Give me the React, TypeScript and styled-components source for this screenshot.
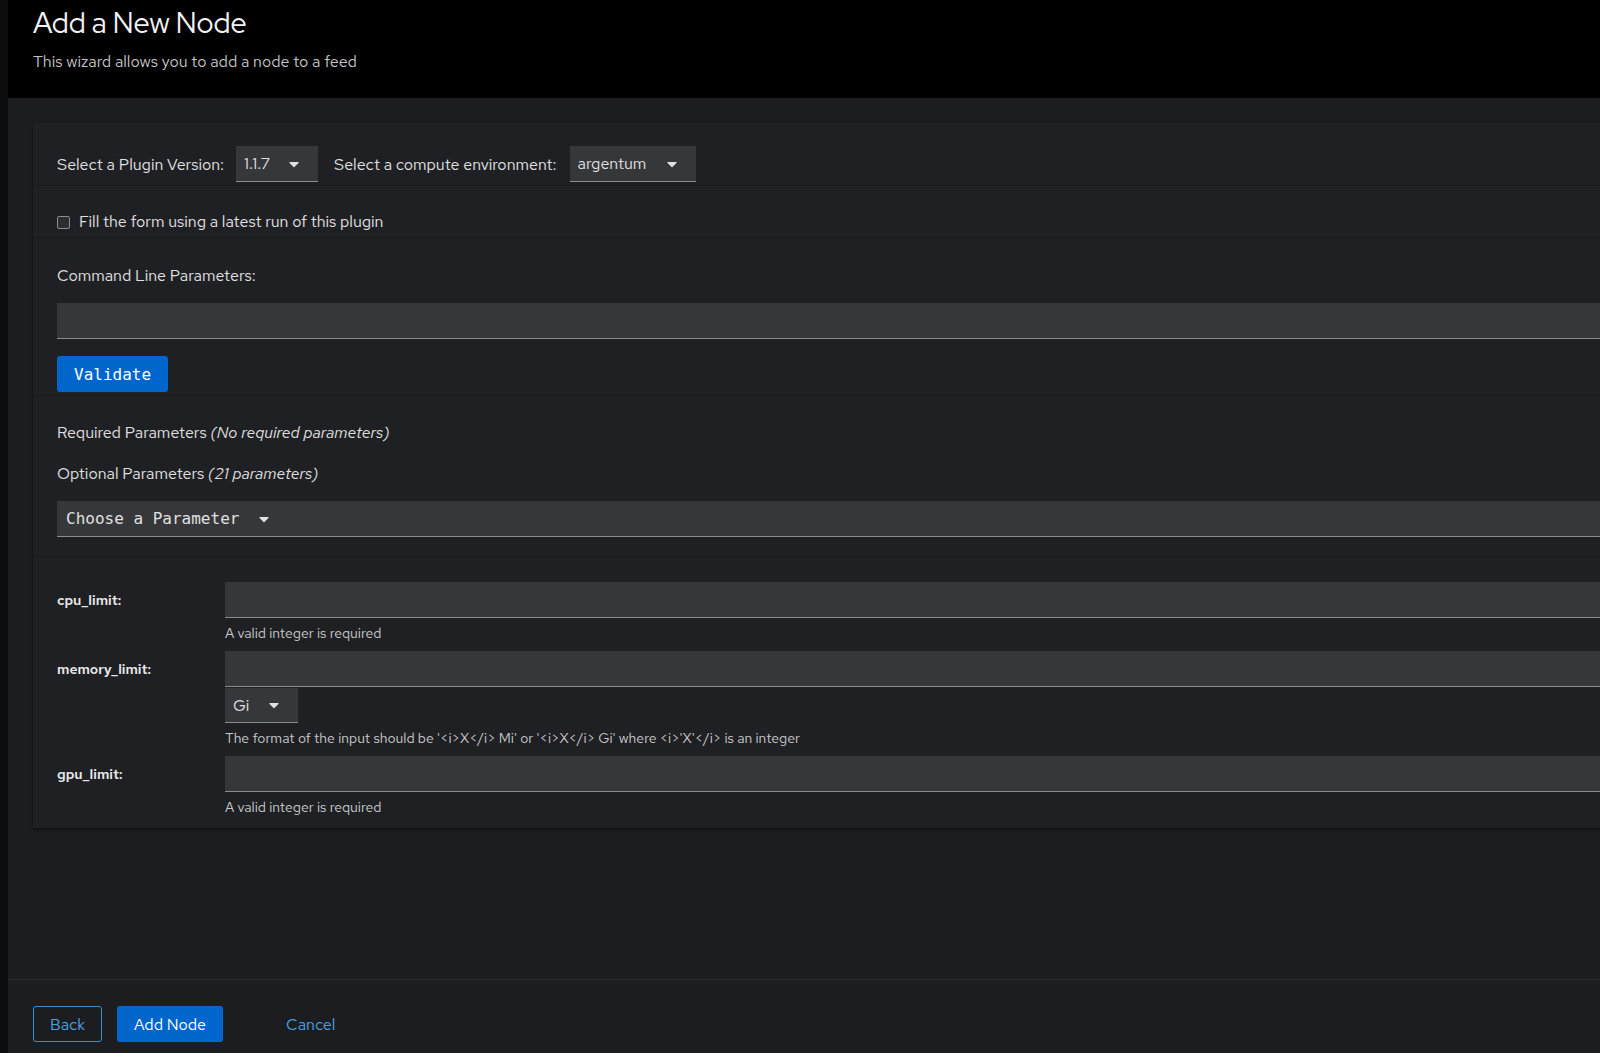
import styled, { createGlobalStyle } from 'styled-components'

const GlobalStyle = createGlobalStyle`
  html, body {
    margin: 0;
    padding: 0;
    background: #1b1d21;
  }
  body {
    font-family: "Red Hat Text", Lato, "Noto Sans", sans-serif;
    color: #e0e0e0;
  }
`

const Shell = styled.div`
  display: flex;
  height: 1053px;
  overflow: hidden;
`

const Rail = styled.div`
  width: 8px;
  flex: none;
  background: #0b0c0e;
`

const Main = styled.div`
  flex: 1;
  min-width: 0;
  display: flex;
  flex-direction: column;
  background: #1b1d21;
`

const Header = styled.header`
  height: 98px;
  box-sizing: border-box;
  padding: 5px 25px 0;
  background: #000;
`

const Title = styled.h1`
  margin: 0;
  font-family: "Red Hat Display", Lato, sans-serif;
  font-size: 28.7px;
  font-weight: 400;
  line-height: 36px;
  color: #f2f2f2;
`

const Subtitle = styled.p`
  margin: 9px 0 0;
  font-size: 16px;
  line-height: 24px;
  color: #c4c4c4;
`

const Body = styled.div`
  flex: 1;
  min-height: 0;
  padding: 25px 0 0 25px;
`

const Card = styled.section`
  background: #1f2024;
  box-shadow: 0 1px 3px rgba(0, 0, 0, 0.6);
  margin-right: -4px;
`

const Section = styled.div<{ $top: number; $bottom: number }>`
  padding: ${(p) => p.$top}px 0 ${(p) => p.$bottom}px 24px;
  border-bottom: 1px solid #18191c;
  &:last-child {
    border-bottom: 0;
  }
`

const Inline = styled.div`
  display: flex;
  align-items: center;
  font-size: 16px;
`

const InlineLabel = styled.span<{ $gap: number }>`
  margin-right: ${(p) => p.$gap}px;
`

const SelectToggle = styled.div<{ $width: number }>`
  display: flex;
  align-items: center;
  justify-content: space-between;
  box-sizing: border-box;
  width: ${(p) => p.$width}px;
  height: 36px;
  padding: 0 19px 0 8px;
  background: #36373a;
  border-bottom: 1px solid #8a8d90;
  font-size: 16px;
  color: #e0e0e0;
  margin-right: 16px;
`

const CheckRow = styled.label`
  display: flex;
  align-items: center;
  gap: 9px;
  font-size: 16px;
  line-height: 20px;
`

const Box = styled.span`
  width: 13px;
  height: 13px;
  box-sizing: border-box;
  border: 1px solid #8a8d90;
  border-radius: 2px;
  background: #2c2e32;
`

const Label = styled.div<{ $gap: number }>`
  font-size: 16px;
  line-height: 20px;
  margin-bottom: ${(p) => p.$gap}px;
  em {
    font-style: italic;
  }
`

const Input = styled.div`
  height: 36px;
  box-sizing: border-box;
  background: #36373a;
  border-bottom: 1px solid #8a8d90;
`

const Validate = styled.button`
  margin-top: 17px;
  height: 36px;
  padding: 0 17px;
  border: 0;
  border-radius: 3px;
  background: #0066cc;
  color: #fff;
  font-family: "DejaVu Sans Mono", monospace;
  font-size: 16px;
`

const ParamToggle = styled.div`
  display: flex;
  align-items: center;
  gap: 20px;
  height: 36px;
  box-sizing: border-box;
  padding: 0 9px;
  background: #36373a;
  border-bottom: 1px solid #8a8d90;
  font-family: "DejaVu Sans Mono", monospace;
  font-size: 16px;
  color: #e0e0e0;
`

const ParamGrid = styled.div`
  display: grid;
  grid-template-columns: 168px 1fr;
  row-gap: 8px;
`

const ParamName = styled.div`
  height: 36px;
  display: flex;
  align-items: center;
  font-size: 14px;
  font-weight: 600;
  color: #e8e8e8;
`

const Helper = styled.div`
  margin-top: 5px;
  font-size: 14px;
  line-height: 20px;
  color: #c9c9c9;
`

const UnitSelect = styled(SelectToggle)`
  height: 35px;
  margin-top: 1px;
  margin-right: 0;
`

const Footer = styled.footer`
  height: 74px;
  box-sizing: border-box;
  display: flex;
  align-items: flex-start;
  gap: 15px;
  padding: 26px 25px 0;
  border-top: 1px solid #2a2c30;
  background: #1b1d21;
`

const Btn = styled.button<{ $kind: 'primary' | 'secondary' | 'link' }>`
  height: 36px;
  padding: 0 16px;
  border-radius: 3px;
  font-family: "Red Hat Text", Lato, sans-serif;
  font-size: 16px;
  border: 1px solid
    ${(p) => (p.$kind === 'secondary' ? '#3a8fd0' : 'transparent')};
  background: ${(p) => (p.$kind === 'primary' ? '#0066cc' : 'transparent')};
  color: ${(p) => (p.$kind === 'primary' ? '#fff' : '#4ba2e0')};
  margin-left: ${(p) => (p.$kind === 'link' ? '31px' : '0')};
`

function Caret() {
  return (
    <svg width="10" height="16" viewBox="0 0 320 512" fill="#e0e0e0">
      <path d="M31.3 192h257.3c17.8 0 26.7 21.5 14.1 34.1L174.1 354.8c-7.8 7.8-20.5 7.8-28.3 0L17.2 226.1C4.6 213.5 13.5 192 31.3 192z" />
    </svg>
  )
}

function Select({ value, width }: { value: string; width: number }) {
  return (
    <SelectToggle $width={width}>
      <span>{value}</span>
      <Caret />
    </SelectToggle>
  )
}

const params = [
  { name: 'cpu_limit', unit: false, help: 'A valid integer is required' },
  {
    name: 'memory_limit',
    unit: true,
    help: "The format of the input should be '<i>X</i> Mi' or '<i>X</i> Gi' where <i>'X'</i> is an integer",
  },
  { name: 'gpu_limit', unit: false, help: 'A valid integer is required' },
]

export default function App() {
  return (
    <>
      <GlobalStyle />
      <Shell>
        <Rail />
        <Main>
          <Header>
            <Title>Add a New Node</Title>
            <Subtitle>This wizard allows you to add a node to a feed</Subtitle>
          </Header>
          <Body>
            <Card>
              <Section $top={23} $bottom={3}>
                <Inline>
                  <InlineLabel $gap={12}>Select a Plugin Version:</InlineLabel>
                  <Select value="1.1.7" width={82} />
                  <InlineLabel $gap={13}>Select a compute environment:</InlineLabel>
                  <Select value="argentum" width={126} />
                </Inline>
              </Section>
              <Section $top={26} $bottom={5}>
                <CheckRow>
                  <Box />
                  Fill the form using a latest run of this plugin
                </CheckRow>
              </Section>
              <Section $top={28} $bottom={3}>
                <Label $gap={17}>Command Line Parameters:</Label>
                <Input />
                <Validate>Validate</Validate>
              </Section>
              <Section $top={27} $bottom={19}>
                <Label $gap={21}>
                  Required Parameters <em>(No required parameters)</em>
                </Label>
                <Label $gap={17}>
                  Optional Parameters <em>(21 parameters)</em>
                </Label>
                <ParamToggle>
                  <span>Choose a Parameter</span>
                  <Caret />
                </ParamToggle>
              </Section>
              <Section $top={25} $bottom={11}>
                <ParamGrid>
                  {params.map((p) => (
                    <>
                      <ParamName key={p.name}>{p.name}:</ParamName>
                      <div key={p.name + '-f'}>
                        <Input />
                        {p.unit ? (
                          <UnitSelect $width={73}>
                            <span>Gi</span>
                            <Caret />
                          </UnitSelect>
                        ) : null}
                        <Helper>{p.help}</Helper>
                      </div>
                    </>
                  ))}
                </ParamGrid>
              </Section>
            </Card>
          </Body>
          <Footer>
            <Btn $kind="secondary">Back</Btn>
            <Btn $kind="primary">Add Node</Btn>
            <Btn $kind="link">Cancel</Btn>
          </Footer>
        </Main>
      </Shell>
    </>
  )
}
